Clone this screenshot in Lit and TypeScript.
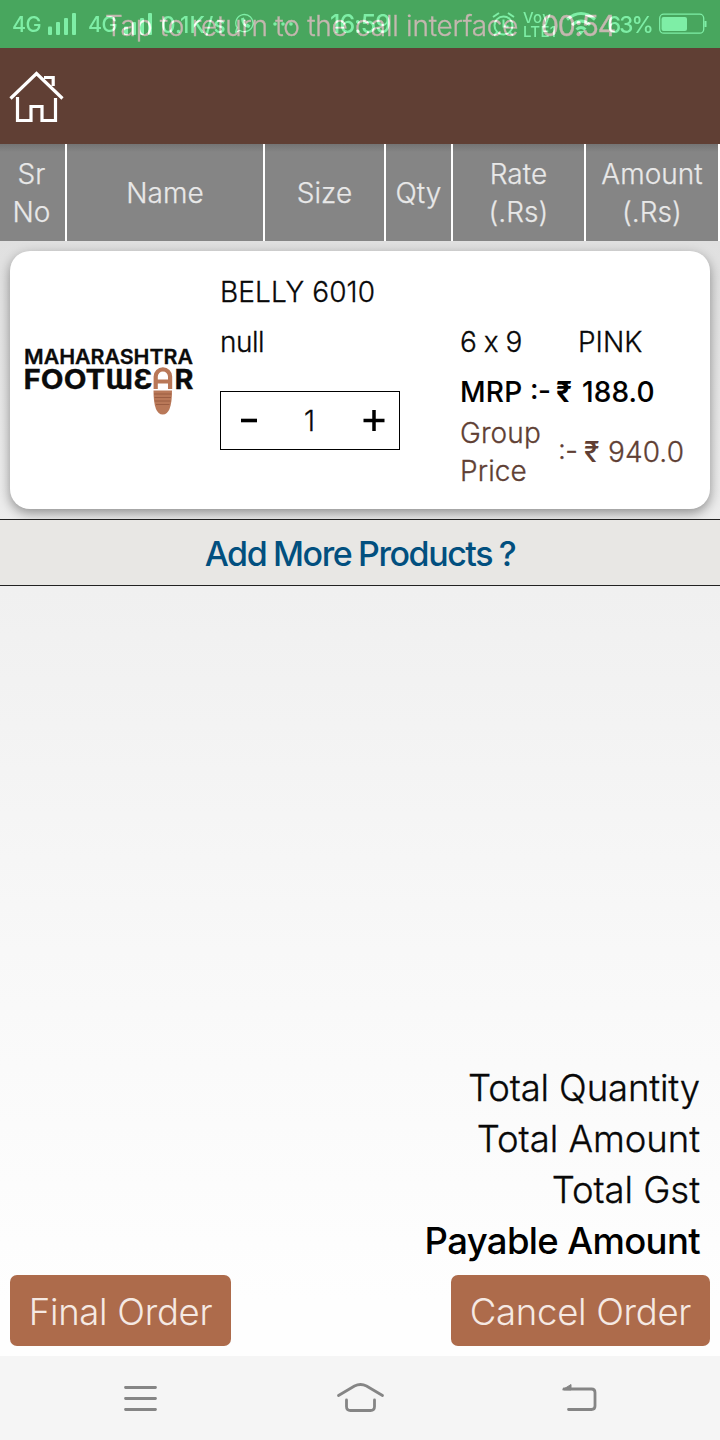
import { LitElement, html, css } from "lit";
import { customElement, state } from "lit/decorators.js";

@customElement("status-bar")
class StatusBar extends LitElement {
  static styles = css`
    :host { display: block; position: relative; isolation: isolate; height: 48px; background: #48a65e; color: #7eeea6; overflow: hidden; }
    .row { display: flex; align-items: center; height: 48px; padding-left: 12px; box-sizing: border-box; font-size: 21.5px; font-weight: 500; line-height: 53px; white-space: nowrap; }
    .net { width: 36px; letter-spacing: -0.6px; }
    .bars { width: 30px; margin-right: 10px; }
    .bars.second { margin-right: 7px; }
    .speed { width: 74px; font-size: 22.5px; letter-spacing: 0.1px; font-feature-settings: "calt" 0; }
    .chat { width: 38px; }
    .dots { width: 57px; }
    .clock { width: 162px; font-size: 25px; font-weight: 500; letter-spacing: -1px; }
    .alarm { width: 31px; }
    .volte { width: 43px; font-size: 15px; line-height: 14px; padding-top: 2px; letter-spacing: 0.3px; }
    .wifi { width: 41px; }
    .battery-text { width: 52px; font-size: 22.5px; letter-spacing: -1.9px; }
    .call { position: absolute; left: 105px; top: 0; display: flex; line-height: 52px; font-size: 28px; font-weight: 300; -webkit-text-stroke: .4px #7d1252; color: #7d1252; white-space: nowrap; mix-blend-mode: plus-lighter; }
    .msg { width: 436px; letter-spacing: -0.25px; }
    .time { font-size: 28.5px; letter-spacing: -1.2px; font-weight: 400; }
    svg { display: block; flex: none; }
  `;
  private bars(cls: string) {
    return html`<svg class=${cls} height="48" viewBox="0 0 30 48" fill="#7eeea6">
      <rect x="0" y="26.5" width="4" height="8.5" rx="1" /><rect x="8" y="22" width="4" height="13" rx="1" />
      <rect x="16" y="18" width="4" height="17" rx="1" /><rect x="24" y="13" width="4" height="22" rx="1" /></svg>`;
  }
  render() {
    return html`
      <div class="row">
        <span class="net">4G</span>${this.bars("bars")}
        <span class="net">4G</span>${this.bars("bars second")}
        <span class="speed">0.1K/s</span>
        <svg class="chat" height="48" viewBox="0 0 38 48" fill="none" stroke="#7eeea6" stroke-width="1.3">
          <path d="M.7 32l1.300-4.500a8.600 8.600 0 1 1 3 3z" /><path fill="#7eeea6" stroke="none" d="M6 18.500q.500 8.500 8 9.500l1.500-2.500-3-2-1.300 1q-2-1-2-3l1-1-1.500-3z" /></svg>
        <svg class="dots" height="48" viewBox="0 0 57 48" fill="#7eeea6"><circle cx="2" cy="24" r="1.8" /><circle cx="10" cy="24" r="1.8" /><circle cx="18" cy="24" r="1.8" /></svg>
        <span class="clock">16:59</span>
        <svg class="alarm" height="48" viewBox="0 0 31 48" fill="none" stroke="#7eeea6" stroke-width="2">
          <circle cx="11.500" cy="25.500" r="9" /><path d="M11.500 19.500v7h5M1 17l6-4M22 17l-6-4M5 32.500l-3 3M18 32.500l3 3" /></svg>
        <span class="volte">Voy<br />LTE1</span>
        <svg class="wifi" height="48" viewBox="0 0 41 48" fill="none" stroke="#7eeea6" stroke-width="3">
          <path d="M1 19.500q14-12 28 0M6 25q9-8 18 0M10.500 29.500q4.500-4 9 0" /><path d="M12 31h6l-3 4z" fill="#7eeea6" stroke="none" /></svg>
        <span class="battery-text">63%</span>
        <svg width="50" height="48" viewBox="0 0 50 48" fill="none"><rect x=".7" y="14.200" width="44" height="19" rx="4" stroke="#7eeea6" stroke-width="1.3" />
          <rect x="2.500" y="17" width="25.500" height="14" rx="2" fill="#7eeea6" /><path d="M46.500 21v6" stroke="#7eeea6" stroke-width="2" /></svg>
      </div>
      <div class="call"><span class="msg">Tap to return to the call interface</span><span class="time">00:54</span></div>
    `;
  }
}

@customElement("brand-logo")
class BrandLogo extends LitElement {
  static styles = css`
    :host { display: block; }
    svg { display: block; overflow: visible; }
    .word { font-family: Inter, "Open Sans", sans-serif; font-weight: 600; fill: #0b0b0b; stroke: #0b0b0b; stroke-width: .3px; }
    .top { font-size: 20px; }
    .bottom { font-size: 27.5px; font-weight: 700; }
  `;
  render() {
    return html`<svg width="170" height="70" viewBox="0 0 170 70">
      <text class="word top" x="-1" y="16.500" textLength="169" lengthAdjust="spacingAndGlyphs">MAHARASHTRA</text>
      <text class="word bottom" x="-1.500" y="42" textLength="129" lengthAdjust="spacingAndGlyphs">FOOTƜƐ</text>
      <text class="word bottom" x="149.500" y="42" textLength="19" lengthAdjust="spacingAndGlyphs">R</text>
      <path d="M130.700 42V29.500a7.200 7.200 0 0 1 14.400 0V42M130.700 34.500h14.400" fill="none" stroke="#b97858" stroke-width="4.200" />
      <path d="M128.500 43.500h18.500q0 24-9.250 24t-9.250-24z" fill="#b97858" />
      <path d="M129 47h17.500M129.500 50.500h16.500M130 54h15.500M131 57.500h13.500" stroke="#975a40" stroke-width=".9" />
    </svg>`;
  }
}

@customElement("order-card")
class OrderCard extends LitElement {
  @state() private quantity = 1;
  static styles = css`
    :host { display: block; }
    .card { display: grid; grid-template-columns: 210px 240px 1fr; height: 258px; box-sizing: border-box; padding-top: 16px; background: #fff; border-radius: 20px; box-shadow: 0 4px 12px rgba(0, 0, 0, .4); font-size: 28px; font-weight: 300; -webkit-text-stroke: .3px; color: #080808; font-feature-settings: "calt" 0; }
    brand-logo { padding: 80px 0 0 15px; -webkit-text-stroke: 0; }
    .line { display: block; height: 50px; line-height: 51px; white-space: pre; }
    .name { letter-spacing: .1px; }
    .null { letter-spacing: -.5px; }
    .stepper { display: grid; grid-template-columns: 55px 67px 56px; align-items: center; width: 180px; height: 59px; margin-top: 24px; box-sizing: border-box; border: 1px solid #000; text-align: center; }
    button { border: 0; padding: 0; background: none; display: flex; justify-content: center; }
    .plus { padding-left: 5px; }
    .spec { display: flex; }
    .size { width: 118px; letter-spacing: -.5px; }
    .mrp { display: flex; font-weight: 500; color: #000; letter-spacing: .1px; -webkit-text-stroke: .1px; }
    .label { width: 70px; letter-spacing: .3px; }
    .sep { width: 26px; letter-spacing: -.6px; font-feature-settings: "calt" 1, "case" 1; }
    .rupee { width: 24px; font-weight: 500; -webkit-text-stroke: 0; }
    .mrp .rupee { width: 26px; font-weight: 700; }
    .group { display: flex; align-items: center; margin-top: -3px; color: #603f34; line-height: 38px; letter-spacing: .1px; }
    .group-label { width: 98px; }
  `;
  render() {
    return html`<div class="card">
      <brand-logo></brand-logo>
      <div>
        <span class="line name">BELLY 6010</span><span class="line null">null</span>
        <div class="stepper">
          <button aria-label="Decrease" @click=${() => this.quantity--}><svg width="22" height="22"><path d="M3 10.500h16" stroke="#000" stroke-width="3.600" /></svg></button>
          <span>${this.quantity}</span>
          <button class="plus" aria-label="Increase" @click=${() => this.quantity++}><svg width="22" height="22"><path d="M0.500 10.500h21M11 0v21" stroke="#000" stroke-width="3.500" /></svg></button>
        </div>
      </div>
      <div>
        <span class="line"></span>
        <div class="line spec"><span class="size">6 x 9</span><span>PINK</span></div>
        <div class="line mrp"><span class="label">MRP</span><span class="sep">:-</span><span class="rupee">₹</span><span>188.0</span></div>
        <div class="group"><span class="group-label">Group<br />Price</span><span class="sep">:-</span><span class="rupee">₹</span><span>940.0</span></div>
      </div>
    </div>`;
  }
}

@customElement("app-root")
class AppRoot extends LitElement {
  static styles = css`
    :host { display: flex; flex-direction: column; height: 1440px; width: 720px; overflow: hidden; font-family: Inter, "Open Sans", sans-serif; font-weight: 300; color: #080808; background: linear-gradient(#e0e0e0 240px, #f0f0f0 590px, #f8f8f8 950px, #fefefe 1300px); }
    .appbar { height: 96px; background: #603f34; flex: none; }
    .head { display: grid; grid-template-columns: 67px 198px 121px 67px 133px 134px; height: 97px; flex: none; background: linear-gradient(#747474, #858585 8px); color: #e8e8e8; font-size: 28px; line-height: 38px; letter-spacing: .05px; -webkit-text-stroke: .25px; }
    .cell { display: flex; align-items: center; justify-content: center; text-align: center; border-right: 2px solid #fff; padding-top: 1px; box-sizing: border-box; }
    .cell:first-child { padding-right: 2px; }
    order-card { margin: 10px; }
    .more { box-sizing: border-box; height: 67px; flex: none; border: 0; border-top: 1px solid #222; border-bottom: 1px solid #222; background: #e8e7e4; color: #02507f; font: 500 34px/67px Inter, sans-serif; letter-spacing: -1.45px; word-spacing: -.8px; padding: 0; }
    .totals { display: flex; flex-direction: column; align-items: flex-end; margin-top: auto; padding-right: 20px; font-size: 36.5px; line-height: 51px; position: relative; top: 1px; letter-spacing: -.05px; -webkit-text-stroke: .3px; }
    .totals span:first-child { letter-spacing: -.15px; }
    .totals .pay { font-weight: 500; color: #000; letter-spacing: -.65px; -webkit-text-stroke: 0; }
    .actions { display: flex; justify-content: space-between; padding: 9px 10px 10px; }
    .btn { border: 0; padding: 0; height: 71px; border-radius: 7px; background: #ad6b4b; color: #f5e9e3; font: 300 36.5px/74px Inter, sans-serif; letter-spacing: -.3px; width: 221px; }
    .btn.cancel { width: 259px; }
    .nav { flex: none; height: 84px; background: #f5f5f5; }
    .nav svg, .appbar svg { display: block; }
  `;
  render() {
    const heads = ["Sr\nNo", "Name", "Size", "Qty", "Rate\n(.Rs)", "Amount\n(.Rs)"];
    return html`
      <status-bar></status-bar>
      <div class="appbar"><svg width="80" height="96" fill="none" stroke="#fff" stroke-width="3.200">
        <path d="M10.500 50.500L36.500 25.500l26 25M44 29.500h9.200V38M17.500 49v23.500h13.500V58.500h11V72.500h13.500V50" /></svg></div>
      <div class="head">${heads.map((h) => html`<div class="cell"><span>${h.split("\n").map((t, i) => html`${i ? html`<br />` : ""}${t}`)}</span></div>`)}</div>
      <order-card></order-card>
      <button class="more">Add More Products ?</button>
      <div class="totals"><span>Total Quantity</span><span>Total Amount</span><span>Total Gst</span><span class="pay">Payable Amount</span></div>
      <div class="actions"><button class="btn">Final Order</button><button class="btn cancel">Cancel Order</button></div>
      <div class="nav"><svg width="720" height="84" fill="none" stroke="#858585" stroke-width="2.800" stroke-linecap="round" stroke-linejoin="round">
        <path d="M125.500 31.500h30M125.500 42.500h30M125.500 53.500h30" />
        <path d="M338.500 39.500l16-9.500q6-3 12 0l16 9.500M346.500 44v6.500q0 4 4 4h20q4 0 4-4V44" />
        <path d="M568.500 53.500h23q3.500 0 3.500-3.500V36.500q0-3.500-3.500-3.500H564" /><path d="M563 33.500l8-5v5z" fill="#858585" stroke-width="1" /></svg></div>
    `;
  }
}
